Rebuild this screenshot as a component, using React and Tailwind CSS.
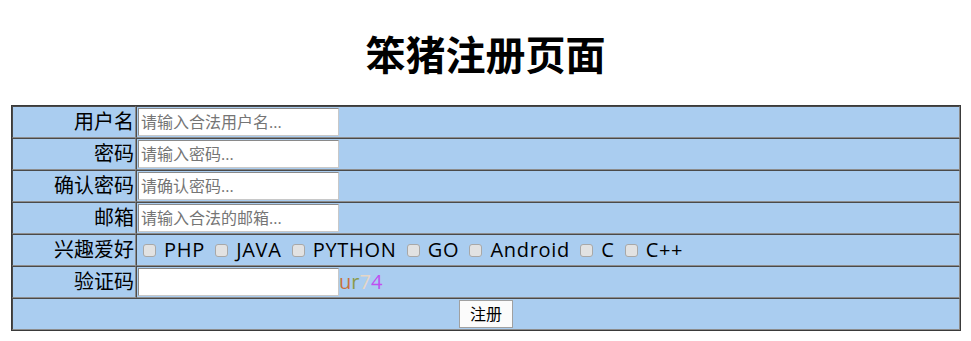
import { useState } from "react";

const hobbies = ["PHP", "JAVA", "PYTHON", "GO", "Android", "C", "C++"];

const cellBorder = "p-[1px] h-[32px] align-middle border border-t-[#4a4a4a] border-l-[#4a4a4a] border-b-[#8c8c8c] border-r-[#8c8c8c]";
const labelCell = "w-[124px] text-right " + cellBorder;
const valueCell = "text-left " + cellBorder;
const inputCls = "w-[201px] h-[28px] bg-white px-[2px] text-[16px] leading-[22px] text-black align-top border border-t-[#8a8a8a] border-l-[#8a8a8a] border-b-[#c8c8c8] border-r-[#c8c8c8] placeholder:text-[#757575] outline-none";

const App = () => {
  const [checked, setChecked] = useState({});

  return (
    <div className="w-[971px] min-h-[341px] bg-white text-black font-['Open_Sans','Noto_Sans_CJK_SC',sans-serif]">
      {/* Title */}
      <h1 className="pt-[27px] pb-[26px] text-center text-[40px] leading-[52px] font-bold font-['Noto_Sans_CJK_SC',sans-serif]">笨猪注册页面</h1>

      {/* Form table */}
      <table className="ml-[11px] w-[950px] border-separate border-spacing-0 border border-[#3a3a3a] bg-[#aacdf0] text-[20px] leading-[28px]">
        <tbody>
          <tr>
            <td className={labelCell}>用户名</td>
            <td className={valueCell}>
              <input className={inputCls} placeholder="请输入合法用户名..." />
            </td>
          </tr>
          <tr>
            <td className={labelCell}>密码</td>
            <td className={valueCell}>
              <input type="password" className={inputCls} placeholder="请输入密码..." />
            </td>
          </tr>
          <tr>
            <td className={labelCell}>确认密码</td>
            <td className={valueCell}>
              <input type="password" className={inputCls} placeholder="请确认密码..." />
            </td>
          </tr>
          <tr>
            <td className={labelCell}>邮箱</td>
            <td className={valueCell}>
              <input className={inputCls} placeholder="请输入合法的邮箱..." />
            </td>
          </tr>
          <tr>
            <td className={labelCell}>兴趣爱好</td>
            <td className={valueCell}>
              {hobbies.map((h) => (
                <label key={h} className="whitespace-nowrap">
                  <input
                    type="checkbox"
                    className="appearance-none ml-[5px] mr-[8px] w-[13px] h-[13px] align-[0px] rounded-[3px] border border-[#a8a8a8] bg-[#e2e2e2] checked:bg-[#3b82f6]"
                    checked={!!checked[h]}
                    onChange={() => setChecked({ ...checked, [h]: !checked[h] })}
                  />
                  <span className="tracking-[0.7px]">{h}</span>{" "}
                </label>
              ))}
            </td>
          </tr>
          <tr>
            <td className={labelCell}>验证码</td>
            <td className={valueCell}>
              <input className={inputCls} />
              <span className="text-[#c8703c]">u</span>
              <span className="text-[#8a9a4a]">r</span>
              <span className="text-[#e6d6c6]">7</span>
              <span className="text-[#c050f0]">4</span>
            </td>
          </tr>
          <tr>
            <td colSpan={2} className={"text-center " + cellBorder}>
              <button className="h-[28px] w-[54px] bg-[#fbfbfb] border border-[#a0a0a0] text-[16px] leading-[20px] align-top">
                注册
              </button>
            </td>
          </tr>
        </tbody>
      </table>
    </div>
  );
};

export default App;
